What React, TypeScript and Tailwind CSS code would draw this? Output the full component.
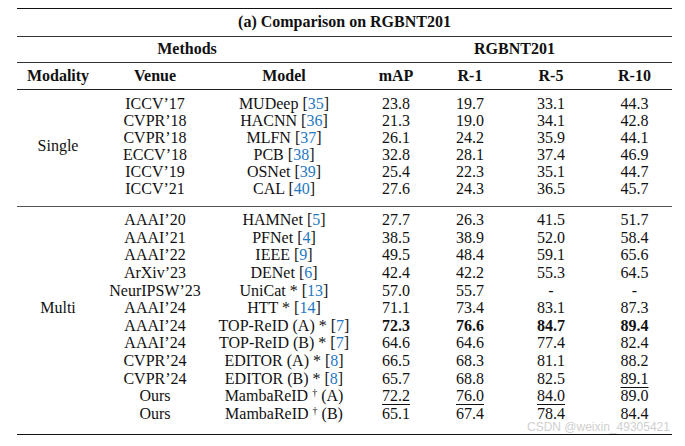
import React from "react"

type Row = {
  venue: string
  model: React.ReactNode
  vals: React.ReactNode[]
}

const cols = "grid grid-cols-[82px_112px_146px_78px_70px_92px_75px]"

const Cite = ({ n }: { n: string }) => (
  <>
    [<span className="text-[#1f78c1]">{n}</span>]
  </>
)

const U = ({ v }: { v: string }) => (
  <span className="underline decoration-1 underline-offset-[3px]">{v}</span>
)

const B = ({ v }: { v: string }) => <span className="font-bold">{v}</span>

const single: Row[] = [
  { venue: "ICCV’17", model: <>MUDeep <Cite n="35" /></>, vals: ["23.8", "19.7", "33.1", "44.3"] },
  { venue: "CVPR’18", model: <>HACNN <Cite n="36" /></>, vals: ["21.3", "19.0", "34.1", "42.8"] },
  { venue: "CVPR’18", model: <>MLFN <Cite n="37" /></>, vals: ["26.1", "24.2", "35.9", "44.1"] },
  { venue: "ECCV’18", model: <>PCB <Cite n="38" /></>, vals: ["32.8", "28.1", "37.4", "46.9"] },
  { venue: "ICCV’19", model: <>OSNet <Cite n="39" /></>, vals: ["25.4", "22.3", "35.1", "44.7"] },
  { venue: "ICCV’21", model: <>CAL <Cite n="40" /></>, vals: ["27.6", "24.3", "36.5", "45.7"] },
]

const multi: Row[] = [
  { venue: "AAAI’20", model: <>HAMNet <Cite n="5" /></>, vals: ["27.7", "26.3", "41.5", "51.7"] },
  { venue: "AAAI’21", model: <>PFNet <Cite n="4" /></>, vals: ["38.5", "38.9", "52.0", "58.4"] },
  { venue: "AAAI’22", model: <>IEEE <Cite n="9" /></>, vals: ["49.5", "48.4", "59.1", "65.6"] },
  { venue: "ArXiv’23", model: <>DENet <Cite n="6" /></>, vals: ["42.4", "42.2", "55.3", "64.5"] },
  { venue: "NeurIPSW’23", model: <>UniCat * <Cite n="13" /></>, vals: ["57.0", "55.7", "-", "-"] },
  { venue: "AAAI’24", model: <>HTT * <Cite n="14" /></>, vals: ["71.1", "73.4", "83.1", "87.3"] },
  {
    venue: "AAAI’24",
    model: <>TOP-ReID (A) * <Cite n="7" /></>,
    vals: [<B v="72.3" />, <B v="76.6" />, <B v="84.7" />, <B v="89.4" />],
  },
  { venue: "AAAI’24", model: <>TOP-ReID (B) * <Cite n="7" /></>, vals: ["64.6", "64.6", "77.4", "82.4"] },
  { venue: "CVPR’24", model: <>EDITOR (A) * <Cite n="8" /></>, vals: ["66.5", "68.3", "81.1", "88.2"] },
  { venue: "CVPR’24", model: <>EDITOR (B) * <Cite n="8" /></>, vals: ["65.7", "68.8", "82.5", <U v="89.1" />] },
  {
    venue: "Ours",
    model: <>MambaReID <sup className="text-[10px]">†</sup> (A)</>,
    vals: [<U v="72.2" />, <U v="76.0" />, <U v="84.0" />, "89.0"],
  },
  {
    venue: "Ours",
    model: <>MambaReID <sup className="text-[10px]">†</sup> (B)</>,
    vals: ["65.1", "67.4", "78.4", "84.4"],
  },
]

function Rows({ rows, label, labelAt, h }: { rows: Row[]; label: string; labelAt: number; h: string }) {
  return (
    <>
      {rows.map((r, i) => (
        <div key={i} className={`${cols} ${h} items-center text-center whitespace-nowrap`}>
          <div>{i === labelAt ? label : ""}</div>
          <div>{r.venue}</div>
          <div>{r.model}</div>
          {r.vals.map((v, j) => (
            <div key={j}>{v}</div>
          ))}
        </div>
      ))}
    </>
  )
}

export default function App() {
  return (
    <div className="relative w-[685px] h-[446px] bg-white pt-[8px] pl-[17px] text-[#111] text-[16px] leading-none font-['Liberation_Serif',serif]">
      <div className="w-[655px]">
        <div className="h-[28.5px] border-t-[1.5px] border-b border-t-[#111] border-b-[#333] flex items-center justify-center font-bold text-[16px]">
          (a) Comparison on RGBNT201
        </div>
        <div className="h-[26px] border-b border-[#333] grid grid-cols-[340px_315px] items-center text-center font-bold">
          <div>Methods</div>
          <div>RGBNT201</div>
        </div>
        <div className={`${cols} h-[27px] border-b border-[#222] items-center text-center font-bold`}>
          <div>Modality</div>
          <div>Venue</div>
          <div>Model</div>
          <div>mAP</div>
          <div>R-1</div>
          <div>R-5</div>
          <div>R-10</div>
        </div>
        <div className="pt-[5.5px] pb-[8.5px] border-b-[1.5px] border-[#555]">
          <Rows rows={single} label="Single" labelAt={-1} h="h-[17.1px]" />
        </div>
        <div className="pt-[4.4px] pb-[11.4px] border-b-[1.5px] border-[#111]">
          <Rows rows={multi} label="Multi" labelAt={5} h="h-[17.6px]" />
        </div>
      </div>
      <div className="absolute left-[17px] top-[95px] w-[82px] h-[102.6px] flex items-center justify-center">
        Single
      </div>
      <div className="absolute left-[527px] top-[421px] text-[12px] leading-none text-[#d0d0d0] font-['Liberation_Sans',sans-serif]">
        CSDN @weixin_49305421
      </div>
    </div>
  )
}
